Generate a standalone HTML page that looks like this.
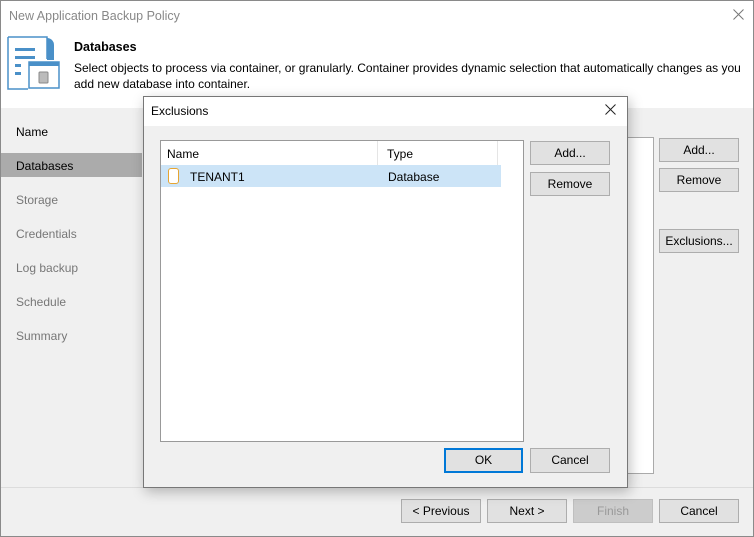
<!DOCTYPE html>
<html><head><style>
*{margin:0;padding:0;box-sizing:border-box}
body{width:754px;height:537px;overflow:hidden;font-family:"Liberation Sans",sans-serif;font-size:12px;color:#000;background:#f0f0f0;position:relative}
.a{position:absolute}
.btn{position:absolute;background:#e1e1e1;border:1px solid #adadad;text-align:center;line-height:22px;font-size:12px;color:#000}
.nav{position:absolute;left:16px;font-size:12px;color:#777}
</style></head><body>
<div class="a" style="left:0;top:0;width:754px;height:537px;border:1px solid #8a8a8a"></div>
<div class="a" style="left:1px;top:1px;width:752px;height:107px;background:#fff"></div>
<div class="a" style="left:9px;top:9px;font-size:12.5px;color:#888">New Application Backup Policy</div>
<svg class="a" style="left:733px;top:9px" width="11" height="11"><path d="M0.5 0.5L10.5 10.5M10.5 0.5L0.5 10.5" stroke="#777" stroke-width="1"/></svg>
<svg class="a" style="left:7px;top:36px" width="54" height="54" viewBox="0 0 54 54">
<path d="M1 1 H40 V23 M1 1 V53 H21" fill="#fff" stroke="#4a90c8" stroke-width="1.5"/>
<path d="M40 2 a7 7 0 0 1 7 7 V24 H40 Z" fill="#4a90c8"/>
<rect x="8" y="12" width="20" height="3" fill="#4a90c8"/><rect x="8" y="20" width="20" height="3" fill="#4a90c8"/><rect x="8" y="28" width="6" height="3" fill="#4a90c8"/><rect x="8" y="36" width="6" height="3" fill="#4a90c8"/>
<rect x="22" y="26" width="30" height="26" fill="#fff" stroke="#4a90c8" stroke-width="1.5"/>
<rect x="22" y="26" width="30" height="4" fill="#4a90c8"/>
<rect x="32" y="36" width="9" height="11" rx="1" fill="#bbb" stroke="#888"/>
</svg>
<div class="a" style="left:74px;top:40px;font-weight:bold;font-size:12.5px">Databases</div>
<div class="a" style="left:74px;top:60px;font-size:12px;line-height:16px;width:680px">Select objects to process via container, or granularly. Container provides dynamic selection that automatically changes as you add new database into container.</div>
<div class="nav" style="top:125px;color:#000">Name</div>
<div class="a" style="left:1px;top:153px;width:141px;height:24px;background:#ababab"></div>
<div class="nav" style="top:159px;color:#000">Databases</div>
<div class="nav" style="top:193px">Storage</div>
<div class="nav" style="top:227px">Credentials</div>
<div class="nav" style="top:261px">Log backup</div>
<div class="nav" style="top:295px">Schedule</div>
<div class="nav" style="top:329px">Summary</div>
<div class="a" style="left:600px;top:137px;width:54px;height:337px;background:#fff;border:1px solid #aaa"></div>
<div class="btn" style="left:659px;top:138px;width:80px;height:24px">Add...</div>
<div class="btn" style="left:659px;top:168px;width:80px;height:24px">Remove</div>
<div class="btn" style="left:659px;top:229px;width:80px;height:24px">Exclusions...</div>
<div class="a" style="left:1px;top:487px;width:752px;height:1px;background:#dcdcdc"></div>
<div class="btn" style="left:401px;top:499px;width:80px;height:24px">&lt; Previous</div>
<div class="btn" style="left:487px;top:499px;width:80px;height:24px">Next &gt;</div>
<div class="btn" style="left:573px;top:499px;width:80px;height:24px;background:#ccc;border-color:#bfbfbf;color:#999">Finish</div>
<div class="btn" style="left:659px;top:499px;width:80px;height:24px">Cancel</div>
<!-- dialog -->
<div class="a" style="left:143px;top:96px;width:485px;height:392px;background:#f0f0f0;border:1px solid #777;box-shadow:2px 4px 12px rgba(0,0,0,.25)"></div>
<div class="a" style="left:144px;top:97px;width:483px;height:29px;background:#fff"></div>
<div class="a" style="left:151px;top:104px;font-size:12px">Exclusions</div>
<svg class="a" style="left:605px;top:104px" width="11" height="11"><path d="M0.5 0.5L10.5 10.5M10.5 0.5L0.5 10.5" stroke="#222" stroke-width="1"/></svg>
<div class="a" style="left:160px;top:140px;width:364px;height:302px;background:#fff;border:1px solid #999"></div>
<div class="a" style="left:377px;top:141px;width:1px;height:24px;background:#e5e5e5"></div>
<div class="a" style="left:497px;top:141px;width:1px;height:24px;background:#e5e5e5"></div>
<div class="a" style="left:167px;top:147px">Name</div>
<div class="a" style="left:387px;top:147px">Type</div>
<div class="a" style="left:161px;top:165px;width:340px;height:22px;background:#cce4f7"></div>
<div class="a" style="left:168px;top:168px;width:11px;height:16px;border:1.5px solid #e6a532;border-radius:3px;background:#fff"></div>
<div class="a" style="left:190px;top:170px">TENANT1</div>
<div class="a" style="left:388px;top:170px">Database</div>
<div class="btn" style="left:530px;top:141px;width:80px;height:24px">Add...</div>
<div class="btn" style="left:530px;top:172px;width:80px;height:24px">Remove</div>
<div class="btn" style="left:444px;top:448px;width:79px;height:25px;border:2px solid #0078d7;line-height:21px">OK</div>
<div class="btn" style="left:530px;top:448px;width:80px;height:25px">Cancel</div>
</body></html>
